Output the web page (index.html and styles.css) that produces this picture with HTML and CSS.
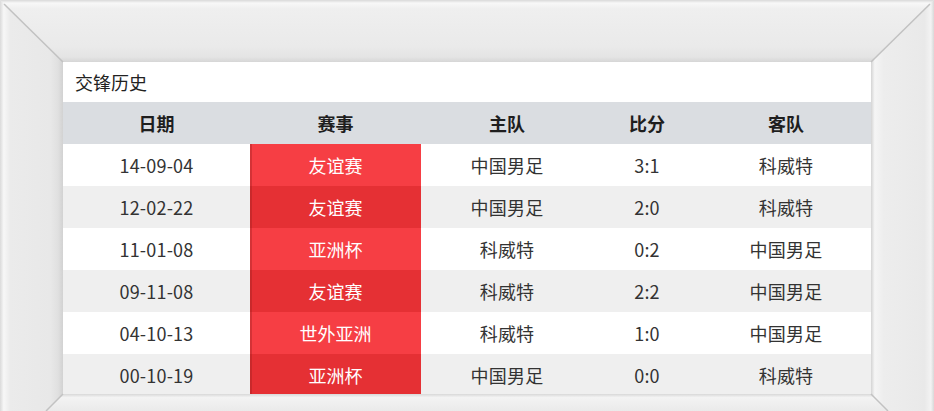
FILE: index.html
```html
<!DOCTYPE html>
<html lang="zh">
<head>
<meta charset="utf-8">
<link rel="stylesheet" href="styles.css">
</head>
<body>
<div class="frame">
  <svg class="frame-art" viewBox="0 0 934 411" width="934" height="411" aria-hidden="true">
    <defs>
      <linearGradient id="gTop" x1="0" y1="0" x2="0" y2="62" gradientUnits="userSpaceOnUse">
        <stop offset="0" stop-color="#d9d9d9"/>
        <stop offset="0.05" stop-color="#f8f8f8"/>
        <stop offset="0.14" stop-color="#efefef"/>
        <stop offset="0.75" stop-color="#eaeaea"/>
        <stop offset="0.92" stop-color="#e4e4e4"/>
        <stop offset="1" stop-color="#d6d6d6"/>
      </linearGradient>
      <linearGradient id="gLeft" x1="0" y1="0" x2="63" y2="0" gradientUnits="userSpaceOnUse">
        <stop offset="0" stop-color="#dadada"/>
        <stop offset="0.06" stop-color="#f7f7f7"/>
        <stop offset="0.16" stop-color="#ebebeb"/>
        <stop offset="0.8" stop-color="#e8e8e8"/>
        <stop offset="0.92" stop-color="#e0e0e0"/>
        <stop offset="1" stop-color="#d2d2d2"/>
      </linearGradient>
      <linearGradient id="gRight" x1="871" y1="0" x2="934" y2="0" gradientUnits="userSpaceOnUse">
        <stop offset="0" stop-color="#d4d4d4"/>
        <stop offset="0.06" stop-color="#f5f5f5"/>
        <stop offset="0.2" stop-color="#ededed"/>
        <stop offset="0.85" stop-color="#e9e9e9"/>
        <stop offset="0.95" stop-color="#f3f3f3"/>
        <stop offset="1" stop-color="#d8d8d8"/>
      </linearGradient>
      <linearGradient id="gBot" x1="0" y1="394" x2="0" y2="411" gradientUnits="userSpaceOnUse">
        <stop offset="0" stop-color="#d8d8d8"/>
        <stop offset="0.2" stop-color="#f3f3f3"/>
        <stop offset="1" stop-color="#eaeaea"/>
      </linearGradient>
    </defs>
    <polygon points="0,0 934,0 871,62 63,62" fill="url(#gTop)"/>
    <polygon points="0,0 63,62 63,394 46,411 0,411" fill="url(#gLeft)"/>
    <polygon points="934,0 934,411 888,411 871,394 871,62" fill="url(#gRight)"/>
    <polygon points="63,394 871,394 888,411 46,411" fill="url(#gBot)"/>
    <line x1="4" y1="4" x2="63" y2="62" stroke="#c2c2c2" stroke-width="1.5"/>
    <line x1="930" y1="4" x2="871" y2="62" stroke="#c2c2c2" stroke-width="1.5"/>
    <line x1="63" y1="394" x2="46" y2="411" stroke="#c2c2c2" stroke-width="1.5"/>
    <line x1="871" y1="394" x2="888" y2="411" stroke="#c2c2c2" stroke-width="1.5"/>
  </svg>
  <div class="panel">
    <div class="title">交锋历史</div>
    <div class="table">
      <div class="row head">
        <div>日期</div><div>赛事</div><div>主队</div><div>比分</div><div>客队</div>
      </div>
      <div class="row">
        <div>14-09-04</div><div class="ev ev-a">友谊赛</div><div>中国男足</div><div>3:1</div><div>科威特</div>
      </div>
      <div class="row alt">
        <div>12-02-22</div><div class="ev ev-b">友谊赛</div><div>中国男足</div><div>2:0</div><div>科威特</div>
      </div>
      <div class="row">
        <div>11-01-08</div><div class="ev ev-a">亚洲杯</div><div>科威特</div><div>0:2</div><div>中国男足</div>
      </div>
      <div class="row alt">
        <div>09-11-08</div><div class="ev ev-b">友谊赛</div><div>科威特</div><div>2:2</div><div>中国男足</div>
      </div>
      <div class="row">
        <div>04-10-13</div><div class="ev ev-a">世外亚洲</div><div>科威特</div><div>1:0</div><div>中国男足</div>
      </div>
      <div class="row alt">
        <div>00-10-19</div><div class="ev ev-b">亚洲杯</div><div>中国男足</div><div>0:0</div><div>科威特</div>
      </div>
    </div>
  </div>
</div>
</body>
</html>
```

FILE: styles.css
```css
* { box-sizing: border-box; }
html, body {
  margin: 0;
  padding: 0;
}
body {
  width: 934px;
  height: 411px;
  overflow: hidden;
  background: #e8e8e8;
  font-family: "Noto Sans CJK SC", "Noto Sans", sans-serif;
}
.frame {
  position: relative;
  width: 934px;
  height: 411px;
  padding: 62px 63px 0 63px;
}
.frame-art {
  position: absolute;
  left: 0;
  top: 0;
  z-index: 0;
}
.panel {
  position: relative;
  z-index: 1;
  width: 808px;
  height: 332px;
  background: #ffffff;
  overflow: hidden;
}
.title {
  height: 40px;
  padding-left: 12px;
  display: flex;
  align-items: center;
  font-size: 18px;
  color: #222;
  background: #fff;
}
.table {
  display: flex;
  flex-direction: column;
}
.row {
  display: grid;
  grid-template-columns: 187px 171px 172px 108px 170px;
  height: 42px;
  background: #ffffff;
  color: #333;
  font-size: 18px;
  letter-spacing: 0.2px;
}
.row > div {
  display: flex;
  align-items: center;
  justify-content: center;
}
.row.alt { background: #efefef; }
.row.head {
  background: #dadde1;
  font-weight: bold;
  color: #1e1e1e;
  letter-spacing: 0;
}
.ev {
  color: #ffffff;
  letter-spacing: 0;
  box-shadow: inset 2px 0 0 rgba(150, 30, 30, 0.35);
}
.ev-a { background: #f63e44; }
.ev-b { background: #e53034; }
```
